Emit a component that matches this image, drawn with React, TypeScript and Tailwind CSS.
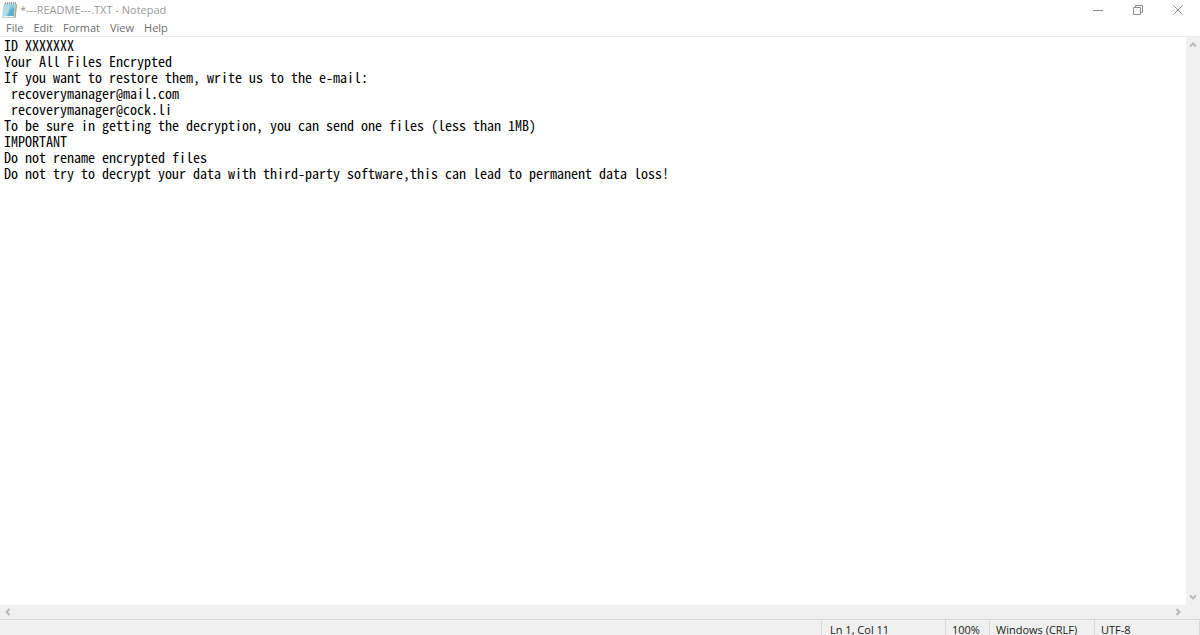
import { useState } from "react";

const INITIAL_TEXT = [
  "ID XXXXXXX",
  "Your All Files Encrypted",
  "If you want to restore them, write us to the e-mail:",
  " recoverymanager@mail.com",
  " recoverymanager@cock.li",
  "To be sure in getting the decryption, you can send one files (less than 1MB)",
  "IMPORTANT",
  "Do not rename encrypted files",
  "Do not try to decrypt your data with third-party software,this can lead to permanent data loss!",
].join("\n");

const MENUS = ["File", "Edit", "Format", "View", "Help"];

function NotepadIcon() {
  return (
    <svg width="16" height="18" viewBox="0 0 16 18" aria-hidden="true">
      <path d="M13 3l2 .6-1.2 12.6-2.8.8z" fill="#b39b70" />
      <path d="M2.500 2.500h11.500L12.500 16.500H.5z" fill="#e9f2f4" stroke="#9fb1b5" strokeWidth=".6" />
      <path d="M2.800 3.500h10.200L11.800 15H.9z" fill="#86c9db" />
      <path d="M2.800 3.500h6L4.500 15H.9z" fill="#a9deea" />
      <path d="M8.500 8l4-1-.7 8H5.500z" fill="#62b0c8" />
      <path d="M3.500 1v2.500M5.500 1v2.500M7.500 1v2.500M9.500 1v2.500M11.500 1v2.500M13.500 1v2.500" stroke="#8b9296" strokeWidth=".8" />
    </svg>
  );
}

function Chevron({ d }: { d: string }) {
  return (
    <svg width="8" height="8" viewBox="0 0 8 8" fill="none" stroke="#b4b4b4" strokeWidth="1.800" aria-hidden="true">
      <path d={d} />
    </svg>
  );
}

function TitleBar() {
  return (
    <header className="flex h-5 shrink-0 items-center justify-between px-0.5">
      <div className="flex items-center gap-0.5">
        <NotepadIcon />
        <h1 className="text-[11px] leading-5 text-[#999999]">*---README---.TXT - Notepad</h1>
      </div>
      <div className="flex h-[18px] text-[#8c8c8c]">
        <button type="button" aria-label="Minimize" className="flex w-10 items-center justify-center">
          <svg width="10" height="10" viewBox="0 0 10 10" stroke="currentColor" aria-hidden="true">
            <path d="M0 5.500h10" />
          </svg>
        </button>
        <button type="button" aria-label="Restore" className="flex w-10 items-center justify-center">
          <svg width="10" height="10" viewBox="0 0 10 10" fill="none" stroke="currentColor" aria-hidden="true">
            <path d="M.5 2.500h7v7h-7zM2.500 2.500v-2h7v7h-2" />
          </svg>
        </button>
        <button type="button" aria-label="Close" className="flex w-10 items-center justify-center">
          <svg width="10" height="10" viewBox="0 0 10 10" stroke="currentColor" aria-hidden="true">
            <path d="M.5.5l9 9M9.500.5l-9 9" />
          </svg>
        </button>
      </div>
    </header>
  );
}

function MenuBar() {
  return (
    <nav className="flex h-[17px] shrink-0 items-end gap-2.5 border-b border-[#ebebeb] pl-1.5">
      {MENUS.map((menu) => (
        <button key={menu} type="button" className="text-[11px] leading-4 text-[#6d6d6d]">
          {menu}
        </button>
      ))}
    </nav>
  );
}

function StatusBar() {
  return (
    <footer className="flex h-4 shrink-0 justify-end overflow-hidden border-t border-[#d7d7d7] text-[11px] leading-5 text-[#1a1a1a]">
      <span className="w-[124px] border-l border-[#d7d7d7] pl-2">Ln 1, Col 11</span>
      <span className="w-11 border-l border-[#d7d7d7] pl-1.5">100%</span>
      <span className="w-[105px] border-l border-[#d7d7d7] pl-1.5">Windows (CRLF)</span>
      <span className="w-[106px] border-x border-[#d7d7d7] pl-1.5">UTF-8</span>
    </footer>
  );
}

export default function App() {
  const [text, setText] = useState(INITIAL_TEXT);

  return (
    <div className="flex h-screen flex-col bg-white font-['Open_Sans','Noto_Sans',sans-serif]">
      <TitleBar />
      <MenuBar />
      <main className="flex min-h-0 flex-1">
        <textarea
          aria-label="Document text"
          value={text}
          onChange={(event) => setText(event.target.value)}
          spellCheck={false}
          wrap="off"
          className="min-w-0 flex-1 resize-none overflow-hidden pl-1 font-['Noto_Sans_Mono_CJK_SC','Liberation_Mono',monospace] text-[14px] leading-4 text-black outline-none"
        />
        <div className="flex w-3.5 shrink-0 flex-col items-center justify-between bg-[#f0f0f0] py-1">
          <button type="button" aria-label="Scroll up">
            <Chevron d="M1 5.500L4 2.500l3 3" />
          </button>
          <button type="button" aria-label="Scroll down">
            <Chevron d="M1 2.500l3 3 3-3" />
          </button>
        </div>
      </main>
      <div className="bg-[#f0f0f0]">
        <div className="flex h-3.5 items-center justify-between pl-1 pr-[18px]">
          <button type="button" aria-label="Scroll left">
            <Chevron d="M5.500 1l-3 3 3 3" />
          </button>
          <button type="button" aria-label="Scroll right">
            <Chevron d="M2.500 1l3 3-3 3" />
          </button>
        </div>
        <StatusBar />
      </div>
    </div>
  );
}
